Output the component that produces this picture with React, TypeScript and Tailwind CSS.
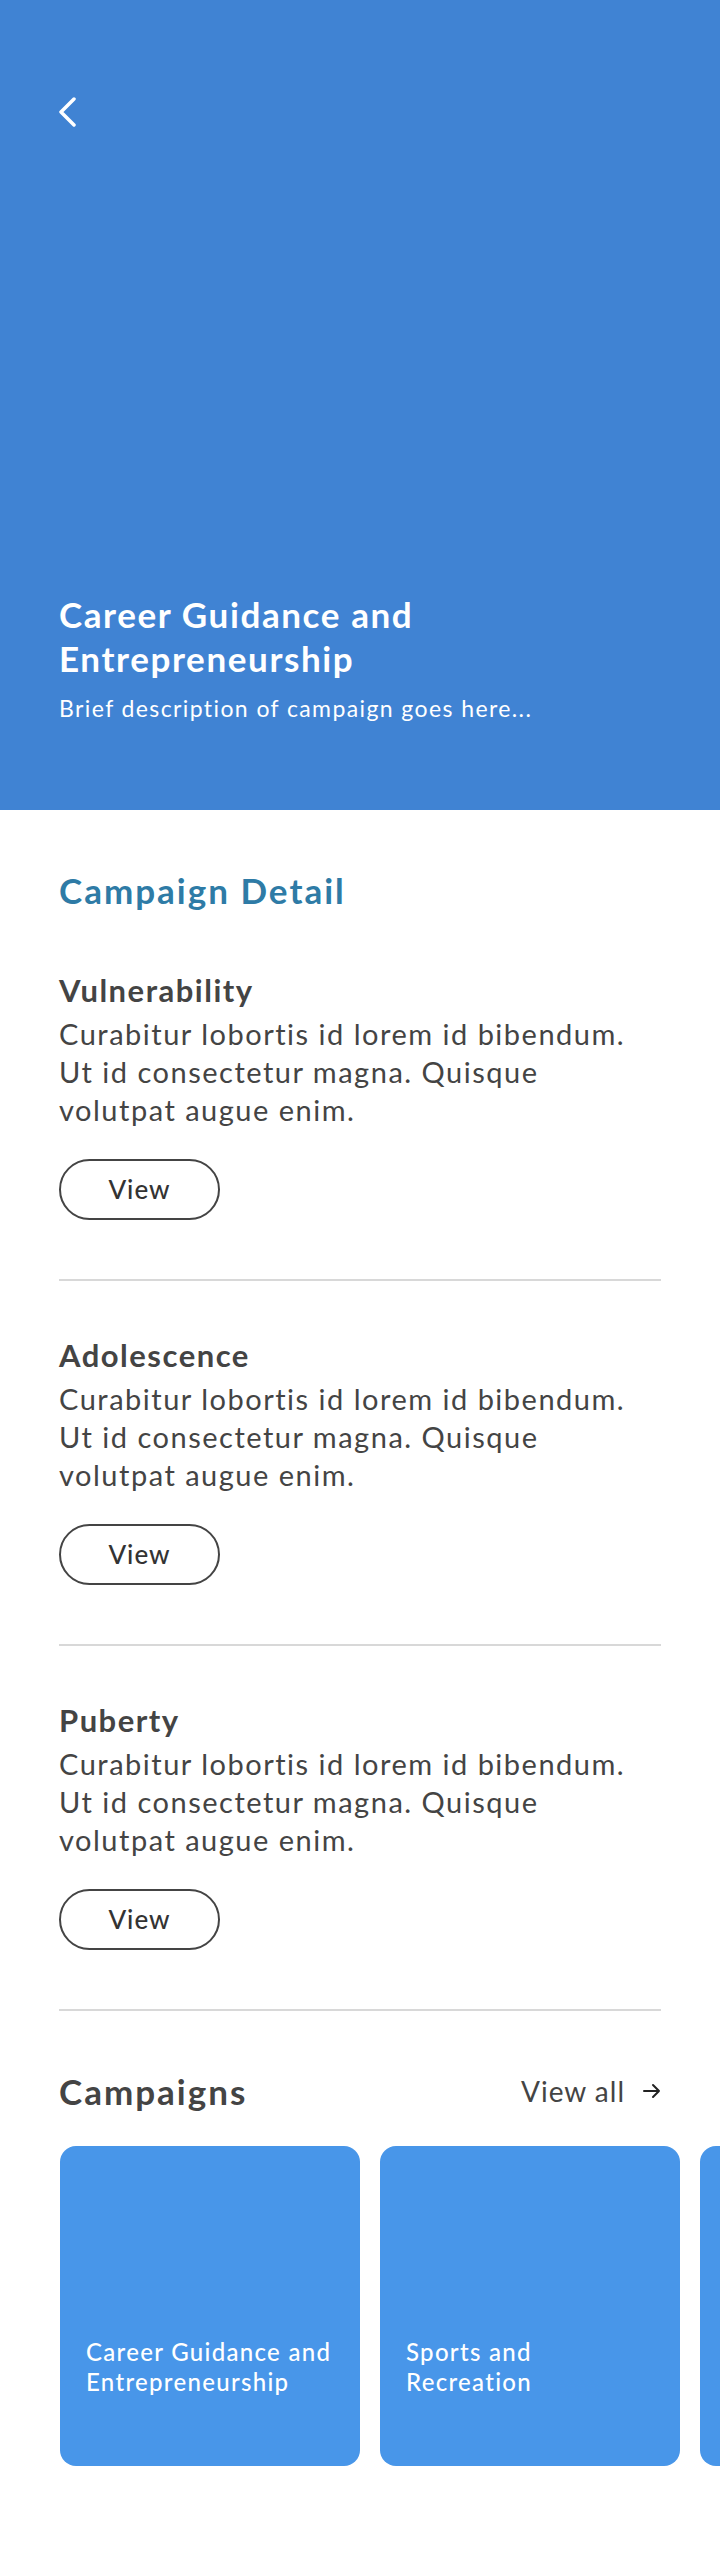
import React from "react";

const sections = [
  {
    title: "Vulnerability",
    body: "Curabitur lobortis id lorem id bibendum. Ut id consectetur magna. Quisque volutpat augue enim.",
  },
  {
    title: "Adolescence",
    body: "Curabitur lobortis id lorem id bibendum. Ut id consectetur magna. Quisque volutpat augue enim.",
  },
  {
    title: "Puberty",
    body: "Curabitur lobortis id lorem id bibendum. Ut id consectetur magna. Quisque volutpat augue enim.",
  },
];

// each card title is split in two lines like the design; last card only peeks in
const campaigns = [
  ["Career Guidance and", "Entrepreneurship"],
  ["Sports and", "Recreation"],
  [],
];

const font = { fontFamily: "Lato, 'Noto Sans', sans-serif" };

export default function App() {
  return (
    <div className="w-[720px] min-h-[2570px] bg-white overflow-hidden" style={font}>
      {/* Hero */}
      <div className="h-[810px] bg-[#4083D3] flex flex-col px-[59px] pt-[97px] pb-[87px]">
        <button className="w-[20px] h-[30px] -ml-[1px]">
          <svg width="20" height="30" viewBox="0 0 20 30" fill="none">
            <path d="M16 2 L3 15 L16 28" stroke="white" strokeWidth="3.5" strokeLinecap="round" strokeLinejoin="round" />
          </svg>
        </button>
        <div className="mt-auto">
          <h1 className="text-[35px] leading-[44px] font-bold tracking-[1.6px] text-white max-w-[460px]">
            Career Guidance and Entrepreneurship
          </h1>
          <p className="mt-[13px] text-[23px] leading-[30px] tracking-[1.4px] text-white">
            Brief description of campaign goes here...
          </p>
        </div>
      </div>

      {/* Campaign Detail */}
      <div className="px-[59px] pt-[58px]">
        <h2 className="text-[35px] leading-[44px] font-bold tracking-[2px] text-[#2E7BA6]">Campaign Detail</h2>
        <div className="mt-[60px]">
          {sections.map((s, i) => (
            <div key={s.title} className={i > 0 ? "pt-[56px]" : ""}>
              <h3 className="text-[31px] leading-[36px] font-bold tracking-[1.5px] text-[#444]">{s.title}</h3>
              <p className="mt-[7px] text-[29px] leading-[38px] font-normal tracking-[1.5px] text-[#444] max-w-[602px]">
                {s.body}
              </p>
              <button className="mt-[30px] w-[161px] h-[61px] rounded-full border-2 border-[#444] text-[26px] font-medium tracking-[1px] text-[#333] flex items-center justify-center">
                View
              </button>
              <div className="mt-[59px] h-[2px] bg-[#D8D8D8]" />
            </div>
          ))}
        </div>

        {/* Campaigns header */}
        <div className="mt-[58px] flex items-center justify-between">
          <h2 className="text-[35px] leading-[44px] font-bold tracking-[2px] text-[#444]">Campaigns</h2>
          <a className="flex items-center gap-[18px] text-[28px] leading-[38px] font-normal tracking-[1px] text-[#444]">
            View all
            <svg width="18" height="16" viewBox="0 0 18 16" fill="none">
              <path d="M1 8 H16 M10 2 L16 8 L10 14" stroke="#222" strokeWidth="2" strokeLinecap="round" strokeLinejoin="round" />
            </svg>
          </a>
        </div>
      </div>

      {/* Campaign cards */}
      <div className="mt-[33px] pl-[60px] pb-[100px] flex gap-[20px] overflow-hidden">
        {campaigns.map((c, i) => (
          <div
            key={i}
            className="shrink-0 w-[300px] h-[320px] rounded-[16px] bg-[#4896E9] flex flex-col justify-end px-[26px] pb-[69px]"
          >
            {c.length > 0 && (
              <p className="text-[24px] leading-[30px] font-medium tracking-[1.3px] text-white">
                {c[0]}
                <br />
                {c[1]}
              </p>
            )}
          </div>
        ))}
      </div>
    </div>
  );
}
